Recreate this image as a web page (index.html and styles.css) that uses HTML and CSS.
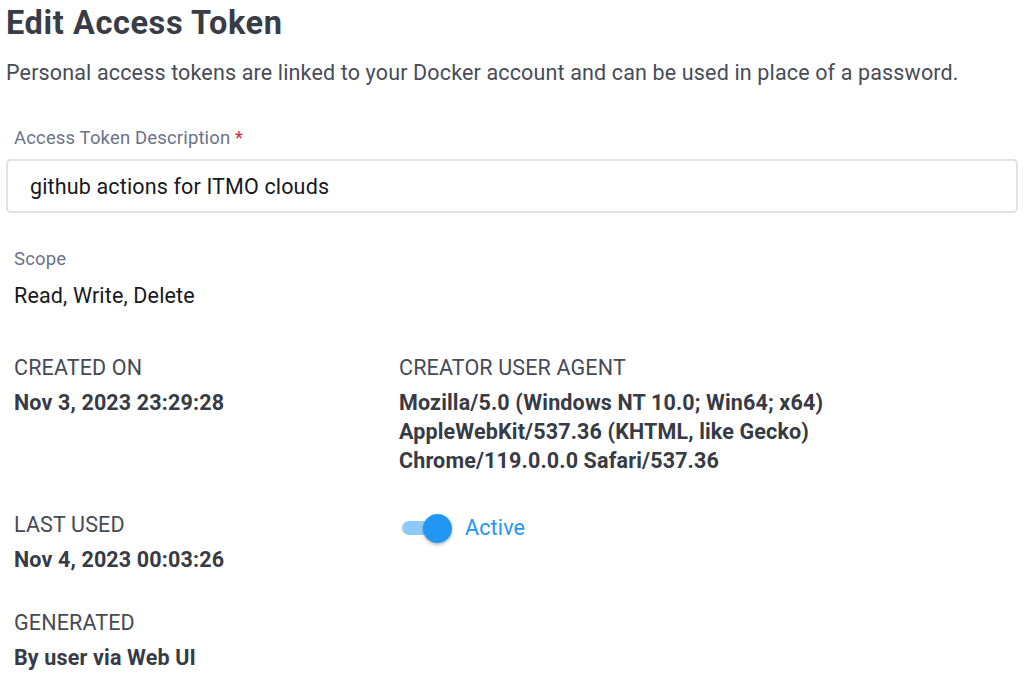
FILE: index.html
```html
<!DOCTYPE html>
<html>
<head>
<meta charset="utf-8">
<link rel="stylesheet" href="styles.css">
</head>
<body>
<div class="page">
  <h1 class="title">Edit Access Token</h1>
  <p class="intro">Personal access tokens are linked to your Docker account and can be used in place of a password.</p>

  <div class="field">
    <label class="label">Access Token Description <span class="req">*</span></label>
    <div class="input">github actions for ITMO clouds</div>
  </div>

  <div class="scope">
    <div class="label">Scope</div>
    <div class="scope-value">Read, Write, Delete</div>
  </div>

  <div class="grid">
    <div class="cell">
      <div class="meta-label">CREATED ON</div>
      <div class="meta-value">Nov 3, 2023 23:29:28</div>
    </div>
    <div class="cell">
      <div class="meta-label">CREATOR USER AGENT</div>
      <div class="meta-value">Mozilla/5.0 (Windows NT 10.0; Win64; x64)<br>AppleWebKit/537.36 (KHTML, like Gecko)<br>Chrome/119.0.0.0 Safari/537.36</div>
    </div>
    <div class="cell">
      <div class="meta-label">LAST USED</div>
      <div class="meta-value">Nov 4, 2023 00:03:26</div>
    </div>
    <div class="cell toggle-cell">
      <span class="switch"><span class="track"></span><span class="thumb"></span></span>
      <span class="active">Active</span>
    </div>
    <div class="cell">
      <div class="meta-label">GENERATED</div>
      <div class="meta-value">By user via Web UI</div>
    </div>
  </div>
</div>
</body>
</html>
```

FILE: styles.css
```css
* { box-sizing: border-box; }
html, body { margin: 0; padding: 0; background: #fff; }
body { font-family: Roboto, "Noto Sans", sans-serif; color: #363b45; }
.page { padding: 0 8px 0 6px; }
.title {
  margin: 0;
  padding-top: 3px;
  font-size: 32.5px;
  line-height: 40px;
  font-weight: 700;
  letter-spacing: 0.6px;
  color: #373c47;
}
.intro {
  margin: 16px 0 0;
  font-size: 21.5px;
  line-height: 28px;
  color: #474c57;
  letter-spacing: 0.15px;
}
.field { margin-top: 39px; }
.label {
  display: block;
  padding-left: 8px;
  font-size: 18.5px;
  line-height: 24px;
  letter-spacing: 0.15px;
  color: #6b7387;
}
.req { color: #d52b3a; }
.input {
  margin-top: 9px;
  height: 54px;
  border: 2px solid #e1e2e6;
  border-radius: 5px;
  padding: 0 22px;
  display: flex;
  align-items: center;
  font-size: 21.5px;
  letter-spacing: 0.15px;
  color: #17191c;
}
.scope { margin-top: 34px; }
.scope-value {
  padding-left: 8px;
  margin-top: 11px;
  font-size: 21.5px;
  line-height: 28px;
  letter-spacing: 0.15px;
  color: #17191c;
}
.grid {
  margin-top: 44px;
  display: grid;
  grid-template-columns: 385px 1fr;
  row-gap: 35.5px;
  padding-left: 8px;
}
.meta-label {
  font-size: 21.5px;
  line-height: 28px;
  letter-spacing: 0.15px;
  color: #454a55;
  font-weight: 400;
}
.meta-value {
  margin-top: 6px;
  font-size: 21.5px;
  line-height: 29px;
  letter-spacing: 0.15px;
  font-weight: 700;
  color: #363b45;
}
.toggle-cell {
  display: flex;
  align-items: flex-start;
  gap: 12px;
}
.switch {
  position: relative;
  width: 54px;
  height: 34px;
  display: inline-block;
  flex: none;
}
.track {
  position: absolute;
  left: 3px;
  top: 10px;
  width: 42px;
  height: 14px;
  border-radius: 7px;
  background: #90c8f6;
}
.thumb {
  position: absolute;
  left: 24px;
  top: 3px;
  width: 29px;
  height: 29px;
  border-radius: 50%;
  background: #2196f3;
  box-shadow: 0 2px 3px rgba(0,0,0,0.25);
}
.active {
  padding-top: 3px;
  font-size: 21.5px;
  line-height: 28px;
  letter-spacing: 0.15px;
  color: #2196f3;
}
```
